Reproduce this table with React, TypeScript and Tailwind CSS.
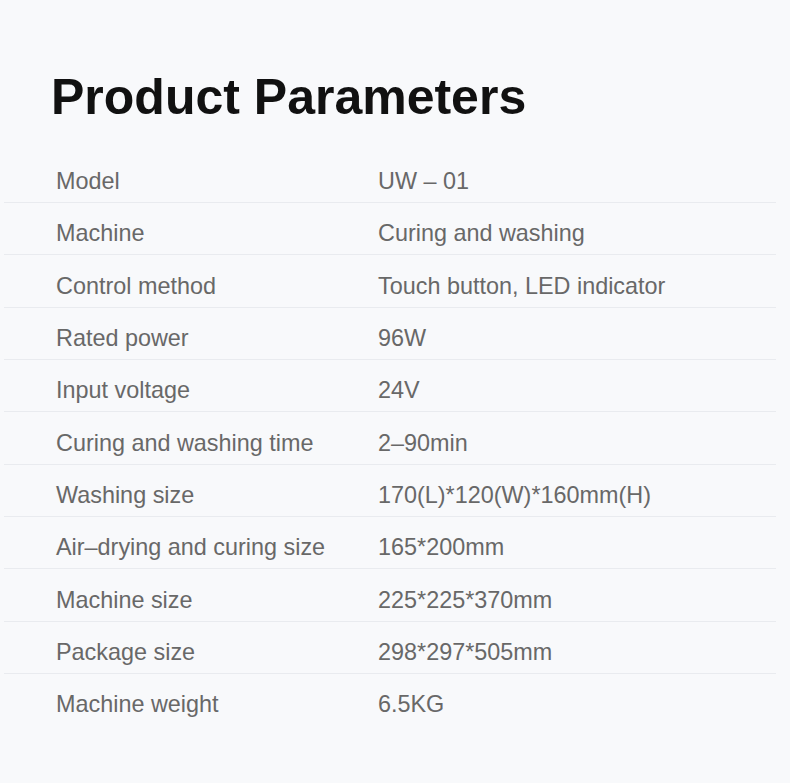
const params: [string, string][] = [
  ["Model", "UW – 01"],
  ["Machine", "Curing and washing"],
  ["Control method", "Touch button, LED indicator"],
  ["Rated power", "96W"],
  ["Input voltage", "24V"],
  ["Curing and washing time", "2–90min"],
  ["Washing size", "170(L)*120(W)*160mm(H)"],
  ["Air–drying and curing size", "165*200mm"],
  ["Machine size", "225*225*370mm"],
  ["Package size", "298*297*505mm"],
  ["Machine weight", "6.5KG"],
];

export default function App() {
  return (
    <div className="w-[790px] h-[783px] bg-[#f8f9fb] overflow-hidden font-['Liberation_Sans',Arial,sans-serif]">
      <h1 className="pt-[71.7px] pl-[51px] text-[50px] leading-none font-bold text-[#111]">
        Product Parameters
      </h1>

      <div className="mt-[29px] ml-[4px] w-[772px]">
        {params.map(([label, value], i) => (
          <div
            key={label}
            className={`flex h-[52.33px] pt-[16.2px] pl-[52px] text-[23.4px] leading-[28px] text-[#686868] ${
              i < params.length - 1 ? "border-b border-[#e9ebef]" : ""
            }`}
          >
            <span className="w-[322px] shrink-0">{label}</span>
            <span>{value}</span>
          </div>
        ))}
      </div>
    </div>
  );
}
